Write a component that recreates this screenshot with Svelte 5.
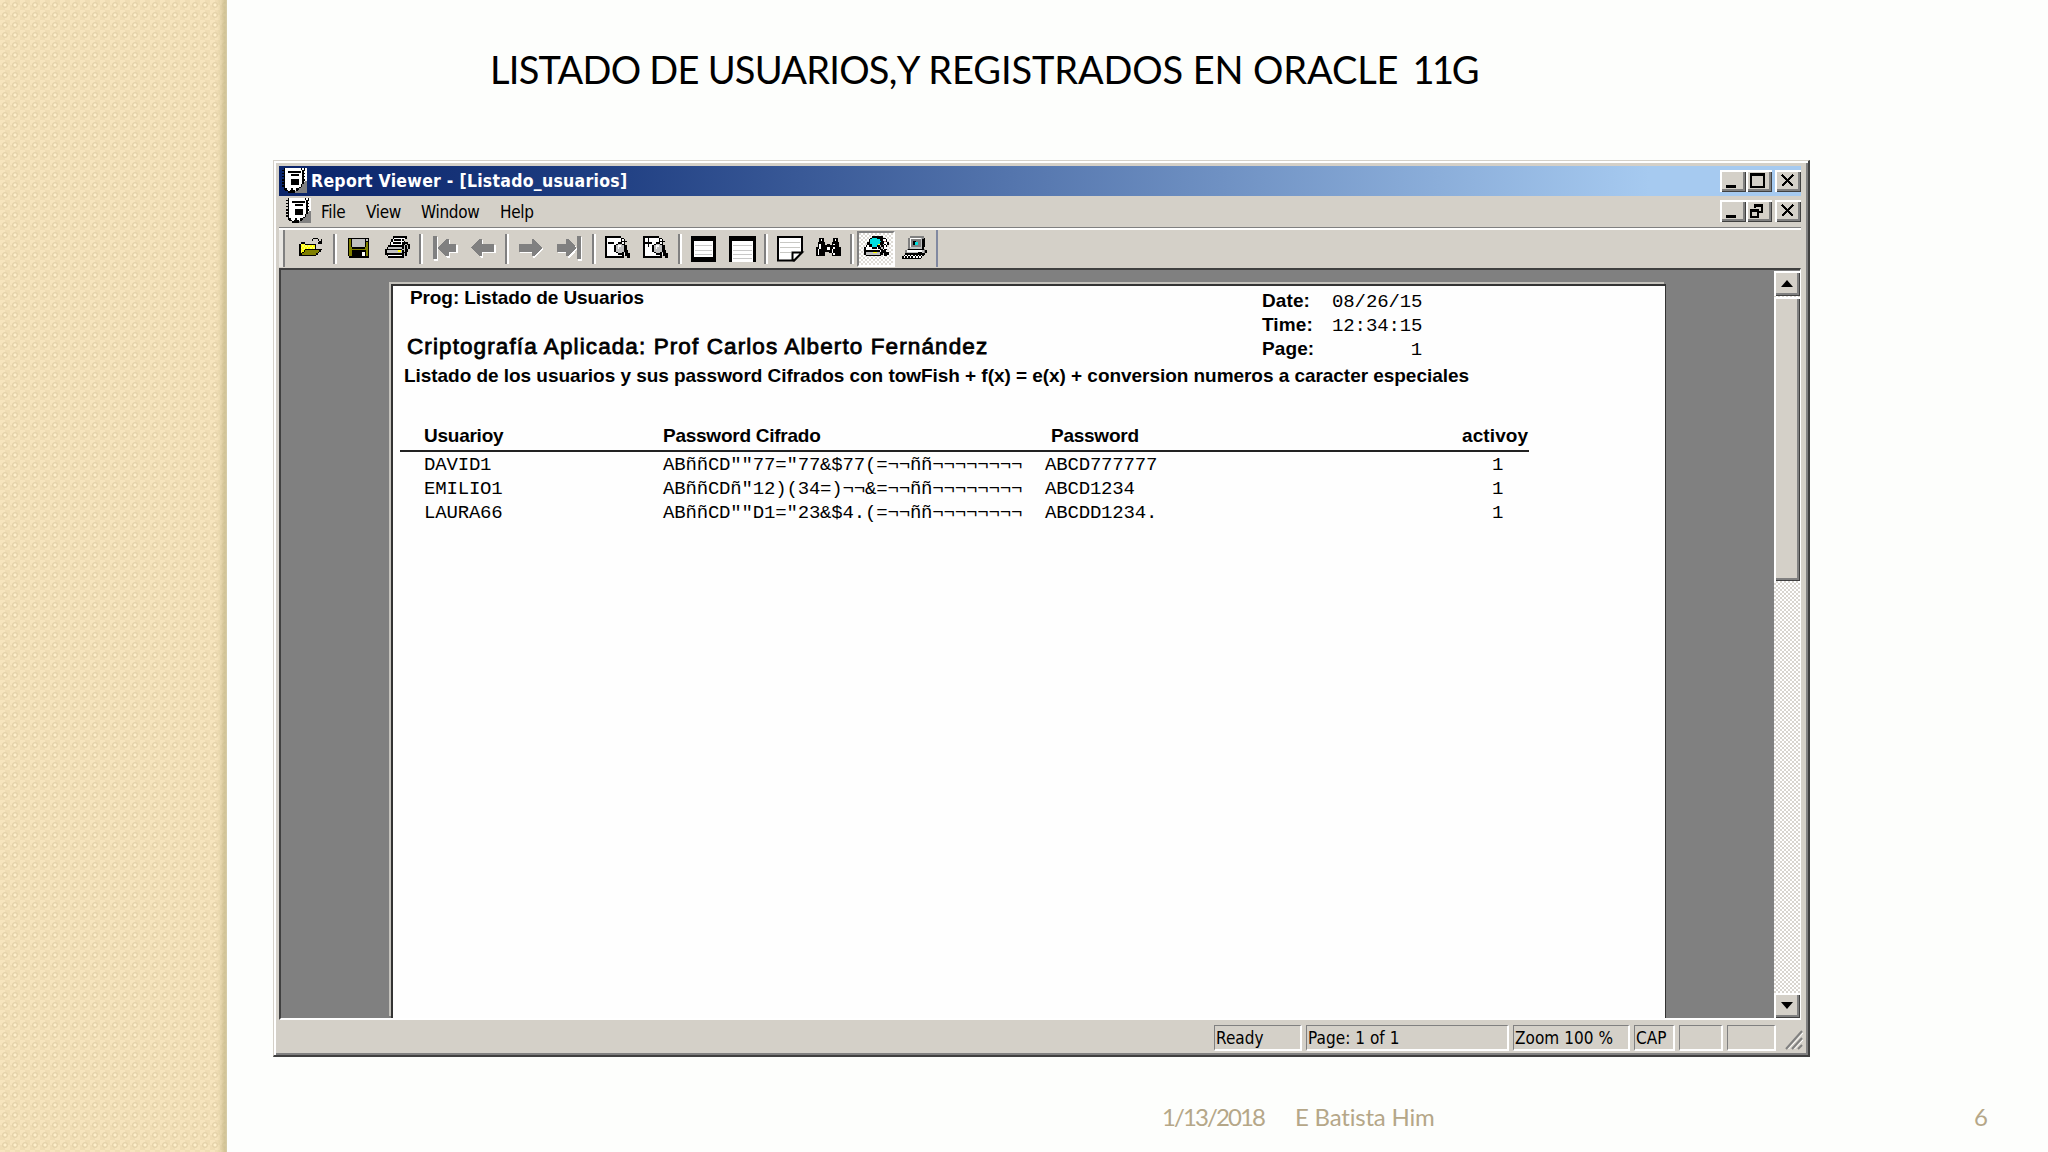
<script>
  const palette = {
    '#': '#000', w: '#fff', y: '#ffff66', o: '#808000', g: '#808080',
    l: '#c0c0c0', c: '#00e0e0', d: '#e8e6e0', r: '#c08080', s: '#d8d6d0', Y: '#ffff00'
  };

  const art = {
    report: [
      '.#wwwwwwwwww#w#w', '##wwwwwwwwwww##w', '.#ww########w#ww', '##wwwwwwwwwww##w',
      '.#wwww#####ww#ww', '##wwwwwwwwwww##w', '.#wwwwwwwwwww#ww', '##wwww#####ww##w',
      '.#wwww#####ww#wg', '##wwww#####ww#gg', '.#wwww#####w#ggg', '##wwwwwwwwww#ggg',
      '.#wwwwwwwww#gggg', '.##www#ww##ggggg', '..##w###w#gggggg', '....####gggggggg'
    ],
    open: [
      '................', '.........###....', '........#...#.#.', '.............##.',
      '.###........###.', '#yYy#######.....', '#YyYyYyYyY#.....', '#yYyYyYyYy#.....',
      '#YyY###########.', '#yY#ooooooooo#..', '#Y#ooooooooo#...', '##ooooooooo#....',
      '###########.....', '................', '................', '................'
    ],
    save: [
      '................', '.##############.', '.#o#llllllll#l#.', '.#o#llllllll###.',
      '.#o#llllllll#o#.', '.#o#llllllll#o#.', '.#o#llllllll#o#.', '.#oo########oo#.',
      '.#oooooooooooo#.', '.#oo#########o#.', '.#oo######ww#o#.', '.#oo######ww#o#.',
      '.#oo######ww#o#.', '..#############.', '................', '................'
    ],
    print: [
      '.....#########..', '.....#wwwwwww#..', '....#w####w#....', '....#wwwwwww#...',
      '...#w#####w####.', '...#wwwwwww##l##', '..##########l#l#', '.#lllllllll#l#l#',
      '###########ll##.', '#lllllllYYl#l##.', '#llllllllll###..', '############l#..',
      '.#wwwwwwwww#l#..', '..##########....', '................', '................'
    ],
    minus: [
      '##########......', '#wwwwwwwww##....', '#wwwwwwwww#w#...', '#wwwwwwwww####..',
      '#w####ww###w#...', '#wwwwww#lll##...', '#wwwww#lwwll##..', '#wwwww#lwlll##..',
      '#wwwww#lllll##..', '#wwwww#lllll###.', '#wwwwww#lll#l##.', '#wwwwwww####w###',
      '#wwwwwwwwww#.###', '############..##', '................', '................'
    ],
    plus: [
      '##########......', '#ww#wwwwww##....', '#ww#wwwwww#w#...', '#ww#wwwwww####..',
      '######ww###w#...', '#ww#www#lll##...', '#ww#ww#lwwll##..', '#wwwww#lwlll##..',
      '#wwwww#lllll##..', '#wwwww#lllll###.', '#wwwwww#lll#l##.', '#wwwwwww####w###',
      '#wwwwwwwwww#.###', '############..##', '................', '................'
    ],
    find: [
      '................', '..###......###..', '..#w#......#w#..', '..###......###..',
      '.#####....#####.', '.#w###.##.#w###.', '.#w############.', '##w####ww##w####',
      '#w#####ww#w#####', '#w########w#####', '#w####..##w#####', '#w####....#w####',
      '######....######', '................', '................', '................'
    ],
    preview: [
      '.....#######....', '....#ccc######..', '...#cccccc##ww#.', '...#ccccccc##r#.',
      '..##cccccc###ww#', '..###ccccY##l#w#', '.#w##ccc##l##w#.', '#wwww###w##l#ww.',
      '#wwwwwwwww##w##.', '##########w###..', '#lllllYYll######', '#lllllllll##.###',
      '.##########..##.', '................', '................', '................'
    ],
    computer: [
      '.....ggggggggg..', '....gwwwwwwwlg#.', '....gwggggggl##.', '....gwg##gggl##.',
      '....gwg#ccggl##.', '....gwg#ccggl##.', '....gwggggggl##.', '....gllllllll#..',
      '...g##########g.', '..gwwwwwwwwwwlg#', '..glllllll###lg#', '..#############.',
      '.#w#w#w#w#w#w#..', '#w#w#w#w#w#w#...', '############....', '................'
    ]
  };

  // Greyed-out navigation arrows: each shape is drawn twice, the white copy is the engraved edge.
  const arrows = {
    first: 'M0 0H2.500V15H0ZM3 7.500L8.500 2H10V5H15V10H10V13H8.500Z',
    prev: 'M0 7.500L5.500 2H7V5H15V10H7V13H5.500Z',
    next: 'M0 5H8V2H9.500L15 7.500L9.500 13H8V10H0Z',
    last: 'M0 5H6V2H7.500L12.500 7.500L7.500 13H6V10H0ZM12.800 0H15.200V15H12.800Z'
  };

  const toolbar = [
    ['open'], ['save', 'print'], ['first', 'prev'], ['next', 'last'], ['minus', 'plus'],
    ['frame', 'sheet'], ['note', 'find'], ['preview', 'computer']
  ];
  const menus = ['File', 'View', 'Window', 'Help'];
  const rows = [
    ['DAVID1', 'ABññCD″″77=″77&$77(=¬¬ññ¬¬¬¬¬¬¬¬', 'ABCD777777', '1'],
    ['EMILIO1', 'ABññCDñ″12)(34=)¬¬&=¬¬ññ¬¬¬¬¬¬¬¬', 'ABCD1234', '1'],
    ['LAURA66', 'ABññCD″″D1=″23&$4.(=¬¬ññ¬¬¬¬¬¬¬¬', 'ABCDD1234.', '1']
  ];
</script>

{#snippet pixels(name)}
  <svg class="pix" viewBox="0 0 16 16" shape-rendering="crispEdges">
    {#each art[name] as line, y}
      {#each line.split('') as ch, x}
        {#if ch !== '.'}<rect {x} {y} width="1" height="1" fill={palette[ch]} />{/if}
      {/each}
    {/each}
  </svg>
{/snippet}

{#snippet tool(name)}
  {#if arrows[name]}
    <svg class="pix" viewBox="0 0 16 16" shape-rendering="crispEdges">
      <path d={arrows[name]} transform="translate(.8 .8)" fill="#fff" />
      <path d={arrows[name]} fill="#808080" />
    </svg>
  {:else if name === 'frame'}
    <svg class="pix tall" viewBox="0 0 25 26" shape-rendering="crispEdges">
      <rect width="25" height="26" /><rect x="3" y="5" width="19" height="16" fill="#fff" />
      <path d="M4 9.500H21M4 14.500H21M4 18.500H21" stroke="#c8c8c8" />
    </svg>
  {:else if name === 'sheet'}
    <svg class="pix wide" viewBox="0 0 27 26" shape-rendering="crispEdges">
      <path d="M0 0H27V26H24V5H3V26H0Z" /><rect x="3" y="5" width="21" height="21" fill="#fff" />
      <path d="M4 9.500H23M4 14.500H23M4 18.500H23M4 22.500H23" stroke="#c8c8c8" />
    </svg>
  {:else if name === 'note'}
    <svg class="pix wide" viewBox="0 0 27 26">
      <path d="M2 1H26V16L18 24.500H2Z" fill="#fff" stroke="#000" stroke-width="2" />
      <path d="M4 6.500H24M4 11.500H24M4 16.500H15" stroke="#c8c8c4" />
      <path d="M16.500 24V16.500H26L18 24.500Z" fill="#fff" stroke="#000" stroke-width="2" />
    </svg>
  {:else}
    {@render pixels(name)}
  {/if}
{/snippet}

{#snippet control(kind)}
  <button class="ctl {kind}" aria-label={kind}>
    <svg viewBox="0 0 26 22" shape-rendering="crispEdges">
      {#if kind === 'minimize'}
        <rect x="6" y="15" width="10" height="3" />
      {:else if kind === 'maximize'}
        <path d="M4 3H19V18H4ZM6 6V16H17V6Z" fill-rule="evenodd" />
      {:else if kind === 'restore'}
        <path d="M8 4H17V13H13V11H15V7H10V8H8Z" />
        <path d="M4 9H13V18H4ZM6 12V16H11V12Z" fill-rule="evenodd" />
      {:else}
        <path d="M7 5L18 16M18 5L7 16" stroke="#000" stroke-width="2.600" />
      {/if}
    </svg>
  </button>
{/snippet}

<div class="slide">
  <aside class="ribbon"></aside>
  <main>
    <h1>LISTADO DE USUARIOS,<span class="rest">Y REGISTRADOS EN ORACLE</span> <span class="version">11G</span></h1>

    <section class="window">
      <header class="titlebar">
        <span class="appicon">{@render pixels('report')}</span>
        <span class="caption">Report Viewer - [Listado_usuarios]</span>
        <div class="controls">
          {@render control('minimize')}{@render control('maximize')}{@render control('close')}
        </div>
      </header>

      <nav class="menubar">
        <span class="appicon">{@render pixels('report')}</span>
        <div class="menus">
          {#each menus as m}<span>{m}</span>{/each}
        </div>
        <div class="controls">
          {@render control('minimize')}{@render control('restore')}{@render control('close')}
        </div>
      </nav>

      <div class="toolbar">
        <div class="tools">
          {#each toolbar as group, i}
            {#if i > 0}<span class="sep"></span>{/if}
            {#each group as name}
              <span class="tool" class:pressed={name === 'preview'}>{@render tool(name)}</span>
            {/each}
          {/each}
        </div>
      </div>

      <div class="client">
        <article class="page">
          <div class="head">
            <div class="headings">
              <p class="prog">Prog: Listado de Usuarios</p>
              <p class="course">Criptografía Aplicada: Prof Carlos Alberto Fernández</p>
            </div>
            <dl>
              <dt>Date:</dt><dd>08/26/15</dd>
              <dt>Time:</dt><dd>12:34:15</dd>
              <dt>Page:</dt><dd>1</dd>
            </dl>
          </div>
          <p class="desc">Listado de los usuarios y sus password Cifrados con towFish + f(x) = e(x) + conversion numeros a caracter especiales</p>
          <div class="table">
            <div class="row th">
              <span>Usuarioy</span><span>Password Cifrado</span><span class="pass">Password</span><span class="active">activoy</span>
            </div>
            {#each rows as r}
              <div class="row">
                {#each r as cell}<span>{cell}</span>{/each}
              </div>
            {/each}
          </div>
        </article>
        <div class="scroll">
          <span class="arrow"><svg viewBox="0 0 12 7"><path d="M6 0L12 7H0Z" /></svg></span>
          <span class="thumb"></span>
          <span class="arrow down"><svg viewBox="0 0 12 7"><path d="M0 0H12L6 7Z" /></svg></span>
        </div>
      </div>

      <footer class="status">
        <span class="ready">Ready</span><span class="pageno">Page: 1 of 1</span><span class="zoom">Zoom 100 %</span><span class="cap">CAP</span><span></span><span class="lastcell"></span>
        <svg class="grip" viewBox="0 0 18 20">
          <path d="M1 19L17 1M7 19L17 8M13 19L17 15" stroke="#808080" stroke-width="2" />
          <path d="M3.500 19L18 3M9.500 19L18 10" stroke="#fff" />
        </svg>
      </footer>
    </section>

    <footer class="slidefoot">
      <span class="fdate">1/13/2018</span><span class="author">E Batista Him</span><span class="num">6</span>
    </footer>
  </main>
</div>

<style>
  :global(body) { margin: 0; background: #fdfffc; overflow: hidden; }
  * { box-sizing: border-box; }
  p, dl, dd, h1 { margin: 0; }
  .slide { display: flex; width: 2048px; height: 1152px; background: #fdfefc; color: #000; }
  .ribbon {
    width: 227px; flex: none;
    background:
      linear-gradient(90deg, transparent 217px, #cdbf9066 221px, #c9bb8bcc 225px, #d7cda8 227px),
      radial-gradient(circle at 5px 5px, #fff0cc 0 1px, #e5d3aa 2px 2.500px, transparent 3.500px) 0 0 / 10px 10px,
      repeating-conic-gradient(#e8d4a855 0 25%, #fbeac266 0 50%) 0 0 / 10px 10px,
      #f3e1ba;
  }
  main { flex: 1; display: flex; flex-direction: column; align-items: flex-start; }
  h1 {
    height: 160px; padding: 45px 0 0 263px; white-space: nowrap;
    font: 400 38px/48px Lato, sans-serif; letter-spacing: -.75px;
  }
  .rest { letter-spacing: -.120px; }
  .version { margin-left: 5px; letter-spacing: -2.400px; }

  .window {
    margin-left: 46px; width: 1537px; height: 897px; padding: 4px 7px 0 5px;
    display: flex; flex-direction: column; background: #d4d0c8;
    border: 1px solid #d4d0c8; border-right: 2px solid #404040; border-bottom: 2px solid #404040;
    box-shadow: inset 2px 2px #fff, inset -2px -2px #808080;
    font-family: "DejaVu Sans Condensed", "DejaVu Sans", sans-serif;
  }
  .pix { display: block; width: 25px; height: 25px; overflow: visible; }
  .pix.tall { height: 26px; }
  .pix.wide { width: 27px; height: 26px; }
  .titlebar {
    height: 30px; flex: none; margin-top: 1px; padding: 2px 0 0 3px; display: flex;
    background: linear-gradient(90deg, #0a246a, #1d3c80 20%, #a6caf0 90%);
  }
  .caption {
    margin-left: 4px; color: #fff; font: 700 17.500px/27px "DejaVu Sans Condensed", "DejaVu Sans", sans-serif;
    white-space: nowrap; letter-spacing: .27px;
  }
  .controls { display: flex; margin-left: auto; padding-top: 2px; }
  .ctl {
    width: 26px; height: 22px; padding: 0; border: 0; background: #d4d0c8;
    box-shadow: inset 2px 2px #fff, inset -1px -1px #404040, inset -3px -3px #808080;
  }
  .ctl svg { display: block; width: 26px; height: 22px; }
  .ctl.close { margin-left: 3px; }
  .menubar { height: 32px; flex: none; padding: 2px 0 0 7px; display: flex; border-bottom: 1px solid #808080; }
  .menus {
    display: grid; grid-template-columns: 45px 55px 79px auto; margin-left: 10px;
    font: 17px/28px "DejaVu Sans Condensed", "DejaVu Sans", sans-serif; letter-spacing: -.3px;
  }

  .toolbar { height: 40px; flex: none; border-top: 2px solid #fff; display: flex; }
  .tools {
    display: flex; align-items: center; width: 659px; height: 37px; padding-left: 13px; flex: none;
    border-right: 2px solid #8088a0; box-shadow: inset 4px 0 #e9e7e2, inset 6px 0 #808080;
  }
  .tool { width: 38.400px; height: 36px; display: flex; align-items: center; justify-content: center; flex: none; }
  .sep { width: 9.400px; height: 30px; flex: none; display: flex; justify-content: center; }
  .sep::before { content: ""; width: 4px; background: linear-gradient(90deg, #808080 50%, #fff 50%); }
  .pressed {
    background: repeating-conic-gradient(#fff 0 25%, #dedbd5 0 50%) 0 0 / 4px 4px;
    border: 2px solid #fff; border-top-color: #808080; border-left-color: #808080;
  }

  .client {
    height: 752px; flex: none; display: flex; justify-content: space-between; background: #808080;
    border: 2px solid #404040; border-right: 1px solid #fff; border-bottom: 2px solid #fff;
  }
  .page {
    width: 1275px; height: 734px; margin: 14px 0 0 110px; background: #fefefe;
    border: 2px solid #333; border-right-width: 1px; border-bottom: 0; box-shadow: -2px -2px #c4c2bc;
    font-family: "Liberation Sans", sans-serif; font-weight: 700; white-space: nowrap;
  }
  .head { display: flex; height: 78px; }
  .headings { width: 869px; }
  .prog { padding-left: 17px; font-size: 19px; line-height: 24px; letter-spacing: -.1px; }
  .course { padding: 22px 0 0 14px; font-size: 22.500px; line-height: 29px; font-weight: 400; -webkit-text-stroke: .8px #000; letter-spacing: 1.100px; }
  dl { display: grid; grid-template-columns: 70px 90px; grid-auto-rows: 24px; padding-top: 3px; font-size: 19px; line-height: 24px; letter-spacing: .1px; }
  dd { font: 400 19px/26px "Liberation Mono", monospace; text-align: right; letter-spacing: -.1px; }
  .desc { padding-left: 11px; font-size: 19px; line-height: 24px; letter-spacing: -.045px; }
  .table { margin: 36px 0 0 7px; width: 1129px; }
  .row {
    display: grid; grid-template-columns: 239px 382px 447px 1fr; padding-left: 24px; height: 24px;
    font: 400 19px/26px "Liberation Mono", monospace; letter-spacing: -.18px;
  }
  .th { font: 700 19px/24px "Liberation Sans", sans-serif; border-bottom: 2px solid #222; height: 28px; letter-spacing: -.25px; }
  .th .pass { padding-left: 6px; }
  .th .active { margin-left: -30px; letter-spacing: .1px; }

  .scroll {
    width: 26px; display: flex; flex-direction: column; margin-top: 1px;
    background: repeating-conic-gradient(#fff 0 25%, #d8d5cf 0 50%) 0 0 / 4px 4px;
  }
  .arrow, .thumb { background: #d4d0c8; box-shadow: inset 2px 2px #fff, inset -1px -1px #404040, inset -3px -3px #808080; }
  .arrow { height: 25px; display: grid; place-items: center; flex: none; }
  .arrow svg { width: 12px; height: 7px; }
  .thumb { height: 284px; margin-top: 1px; }
  .down { margin-top: auto; }

  .status { display: flex; height: 32px; padding: 5px 0 0 935px; gap: 4px; font: 17px/24px "DejaVu Sans Condensed", sans-serif; letter-spacing: .05px; }
  .status span { height: 26px; width: 44px; padding-left: 1px; border: 1px solid #808080; border-right: 2px solid #fff; border-bottom: 2px solid #fff; white-space: nowrap; flex: none; }
  .status .ready { width: 88px; }
  .status .pageno { width: 203px; }
  .status .zoom { width: 117px; }
  .status .cap { width: 41px; }
  .status .lastcell { width: 49px; }
  .grip { width: 18px; height: 20px; margin: 5px 0 0 5px; flex: none; }

  .slidefoot { display: flex; align-items: center; margin-top: 43px; width: 100%; height: 34px; font: 24px/34px Lato, sans-serif; color: #b5a788; white-space: nowrap; }
  .fdate { margin-left: 935px; width: 133px; letter-spacing: -1.900px; }
  .author { width: 679px; letter-spacing: -.2px; }
</style>
